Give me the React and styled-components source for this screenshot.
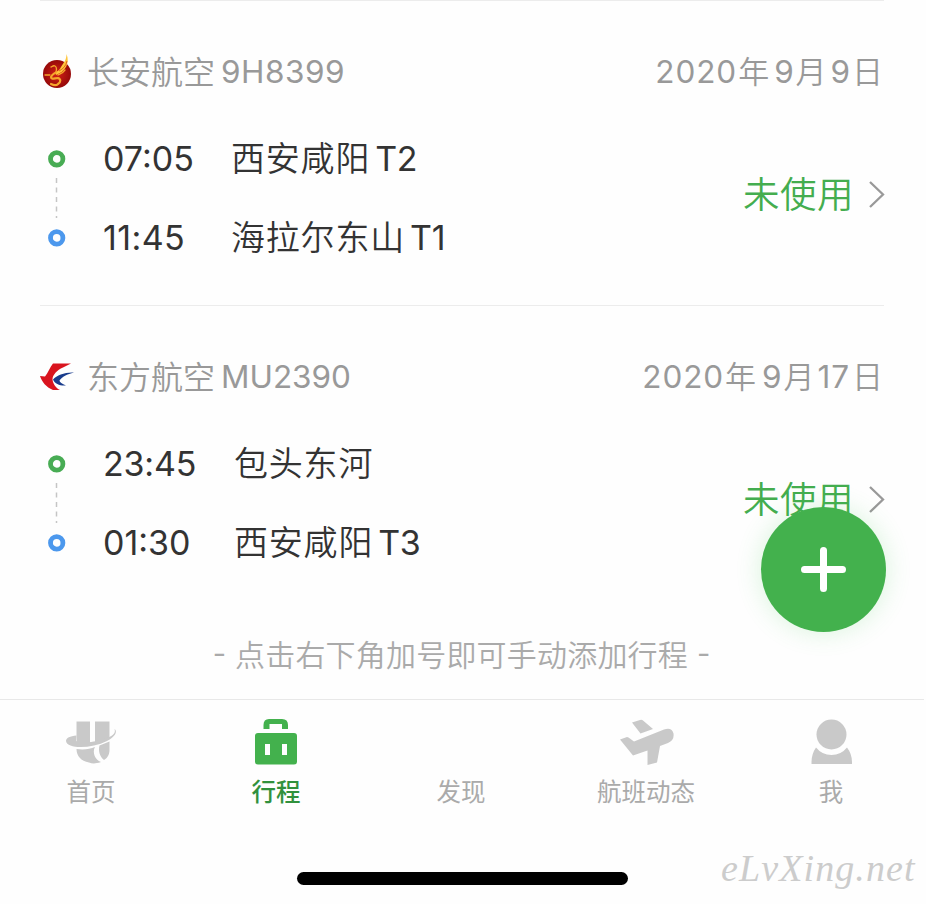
import React from "react";
import styled, { createGlobalStyle } from "styled-components";

const GlobalStyle = createGlobalStyle`
  * { box-sizing: border-box; }
  body { margin: 0; background: #fefefe; }
`;

const Screen = styled.main`
  position: relative;
  width: 926px;
  height: 904px;
  overflow: hidden;
  display: flex;
  flex-direction: column;
  background: #fefefe;
  font-family: "Inter", "Noto Sans CJK SC", sans-serif;
  font-weight: 370;
  white-space: nowrap;
`;

const Trips = styled.div`
  height: 699px;
  padding: 0 43px 0 40px;
`;

const Card = styled.section`
  height: 305px;
  border-top: 1px solid #ececec;
  padding-top: 47px;
  margin-right: -1px;
`;

const Header = styled.header`
  display: flex;
  align-items: center;
  height: 48px;
  padding-right: 1px;
  color: #999;
`;

const Logo = styled.svg`
  width: 34px;
  height: 38px;
  margin-right: 13px;
  flex: none;
`;

const Cjk = styled.span`
  font-family: "Noto Sans CJK SC", sans-serif;
  font-weight: ${(p) => p.$weight || 350};
  font-size: ${(p) => p.$size}px;
  line-height: 46px;
  padding-bottom: 4px;
  letter-spacing: ${(p) => p.$track || 0}px;
`;

const Latin = styled.span`
  font-size: ${(p) => p.$size}px;
  line-height: 48px;
  letter-spacing: ${(p) => p.$track || 0}px;
  margin-left: ${(p) => p.$before || 0}px;
  margin-right: ${(p) => p.$after || 0}px;
`;

const DateLabel = styled.div`
  margin-left: auto;
  display: flex;
  align-items: center;
`;

const Body = styled.div`
  display: flex;
  margin-top: 39px;
  height: 127px;
`;

const Route = styled.div`
  width: 63px;
  padding: 15px 0 0 8px;
`;

const Legs = styled.div`
  display: flex;
  flex-direction: column;
  gap: 31px;
  color: #333;
`;

const Leg = styled.div`
  display: flex;
  align-items: center;
  height: 48px;
`;

const Time = styled.time`
  width: ${(p) => p.$width}px;
  font-size: 34px;
  line-height: 48px;
  letter-spacing: ${(p) => p.$track}px;
`;

const Status = styled.div`
  display: flex;
  align-items: center;
  height: 48px;
  margin: 36px -3px 0 auto;
  color: #44ad4f;
`;

const Chevron = styled.svg`
  width: 20px;
  height: 30px;
  margin-left: 13px;
`;

const Hint = styled.p`
  display: flex;
  justify-content: center;
  margin: 20px 0 0;
  color: #aaa;
`;

const HintDash = styled.span`
  font-size: 29px;
  line-height: 48px;
  margin: 0 9px;
`;

const AddButton = styled.button`
  position: absolute;
  left: 761px;
  top: 507px;
  width: 125px;
  height: 125px;
  padding: 0;
  border: 0;
  border-radius: 50%;
  background: #43b14d;
  box-shadow: 0 0 26px rgba(67, 200, 80, 0.2);
  svg { display: block; }
`;

const TabBar = styled.nav`
  display: grid;
  grid-template-columns: repeat(5, 185px);
  width: 924px;
  height: 130px;
  border-top: 1px solid #e8e8e8;
  padding-top: 13px;
`;

const Tab = styled.a`
  display: flex;
  flex-direction: column;
  align-items: center;
  padding-right: 4px;
  color: ${(p) => (p.$active ? "#31913d" : "#aaa")};
  font-family: "Noto Sans CJK SC", sans-serif;
  font-size: 24.5px;
  font-weight: ${(p) => (p.$active ? 500 : 400)};
  line-height: 36px;
  svg { width: 60px; height: 60px; display: block; fill: ${(p) => (p.$active ? "#43b14d" : "#c9c9c9")}; }
`;

const TabLabel = styled.span`
  margin-left: 1px;
`;

const Footer = styled.footer`
  display: flex;
  height: 75px;
`;

const HomeIndicator = styled.div`
  flex: none;
  width: 331px;
  height: 13px;
  margin: 43px 0 0 297px;
  border-radius: 7px;
  background: #000;
`;

const Watermark = styled.span`
  margin: 15px 0 0 93px;
  font-family: "Liberation Serif", serif;
  font-style: italic;
  font-size: 38px;
  line-height: 48px;
  letter-spacing: 1.1px;
  color: #ccc;
`;

const ChanganLogo = () => (
  <Logo viewBox="0 0 34 38">
    <defs>
      <radialGradient id="changan">
        <stop offset="0" stopColor="#d32117" />
        <stop offset="1" stopColor="#960909" />
      </radialGradient>
    </defs>
    <circle cx="17" cy="21" r="14" fill="url(#changan)" />
    <g fill="none" stroke="#f5a62c" strokeLinecap="round">
      <path d="M21 18C17 19 12 21 11 24C11 27 15 25 18 25C21 26 21 29 18 31C16 33 13 32 11 31" strokeWidth="2.2" />
      <path d="M25 17C22 21 20 21 18 22M15 20C17 18 17 14 15 13C13 12 12 14 11 14M10 22L5 22" strokeWidth="1.3" />
    </g>
    <path d="M26.500 1C30 10 26 18 16 22C15 20 19 18 21 14C24 9 26.500 7 26.500 1Z" fill="#ffc63b" />
    <path d="M27 8C26 13 23 16 19 18" fill="none" stroke="#cf3b16" strokeWidth=".7" />
  </Logo>
);

const EasternLogo = () => (
  <Logo viewBox="0 0 34 38">
    <path d="M13 5.5H31L23 9.500C17 12 12.500 17 12.500 21.500C13 26 16 30 20 32H13C6 29 2 24 0 18L5 18.500C8 15 10 9 13 5.500Z" fill="#d9141e" />
    <path d="M34 14.500C25 14 17 17 13 21.500C15 26 20 28 26 27.500C22 26 19.500 24 19.500 22.500C22 19 27 16 34 14.500Z" fill="#193c8c" />
  </Logo>
);

const RouteMark = () => (
  <Route>
    <svg width="18" height="97" viewBox="0 0 18 97" fill="none">
      <circle cx="8.7" cy="8.9" r="6.2" stroke="#48ac54" strokeWidth="4.8" />
      <path d="M8.5 28V68" stroke="#c5c5c5" strokeWidth="1.5" strokeDasharray="5 4.5" />
      <circle cx="8.7" cy="87.9" r="6.2" stroke="#4c98ed" strokeWidth="4.8" />
    </svg>
  </Route>
);

function Flight({ logo, airline, number, track, date, legs, timeWidth }) {
  return (
    <Card>
      <Header>
        {logo}
        <Cjk $size={32}>{airline}</Cjk>
        <Latin $size={31.5} $before={6} $track={track}>{number}</Latin>
        <DateLabel>
          {date.map(([n, unit, before, after]) => (
            <React.Fragment key={unit}>
              <Latin $size={31.5} $track={0.9} $before={before} $after={after}>{n}</Latin>
              <Cjk $size={31}>{unit}</Cjk>
            </React.Fragment>
          ))}
        </DateLabel>
      </Header>
      <Body>
        <RouteMark />
        <Legs>
          {legs.map(([time, timeTrack, place, terminal]) => (
            <Leg key={time}>
              <Time $width={timeWidth} $track={timeTrack}>{time}</Time>
              <Cjk $size={34} $track={0.8}>{place}</Cjk>
              <Latin $size={34} $before={5} $track={-0.3}>{terminal}</Latin>
            </Leg>
          ))}
        </Legs>
        <Status>
          <Cjk $size={36.5} $track={0.5}>未使用</Cjk>
          <Chevron viewBox="0 0 20 30" fill="none" stroke="#999" strokeWidth="2.3">
            <path d="M3 2L16 14.5L3 27" />
          </Chevron>
        </Status>
      </Body>
    </Card>
  );
}

const HomeIcon = () => (
  <svg viewBox="0 0 60 60">
    <path d="M15.500 8.500H29V31H15.500ZM34 8.500H48.500V25L34 30Z" />
    <path d="M15.500 22.500C9 23 5 25 5 28C6 36 30 36 46 28C54 24 57 18.500 53.500 16C55 20 52 22.500 47 24.500C36 29 24 31 15 28Z" />
    <path d="M15.500 36C23 37 29 36 34 34C31 39 34 47 40 49C34 51 31 50.500 28 49.500C20 48 15.500 43 15.500 36ZM38.500 32.500L48.500 28.500V37C48.500 42 46 45.500 43 47C39 44 37 38 38.500 32.500Z" />
  </svg>
);

const BagIcon = () => (
  <svg viewBox="0 0 60 60">
    <path d="M17.5 16V12Q17.5 6 23 6H36Q42 6 42 12V16H36V11H23.5V16Z" />
    <path fillRule="evenodd" d="M12 20H48Q51 20 51 23V48.5Q51 51.5 48 51.5H12Q9 51.5 9 48.5V23Q9 20 12 20ZM19 31V42H24V31ZM36 31V42H41V31Z" />
  </svg>
);

const PlaneIcon = () => (
  <svg viewBox="0 0 60 60">
    <path d="M16 9.500L24 7Q26 6.500 27 7.500L37 16L24.500 20.500ZM4 26.500L11 24L12.500 24.500L18 28.500L48 16.500Q56 14 57.500 20.500Q58.500 27 52 30L44 33L41 49.500L31.500 52V37.500L17 42.500Z" />
  </svg>
);

const PersonIcon = () => (
  <svg viewBox="0 0 60 60">
    <circle cx="30.5" cy="21.500" r="15" />
    <path d="M15 34.500Q21 42 30.500 42Q40 42 46 34.500Q51 41 51 49V51H10.500V49Q10.500 41 15 34.500Z" />
  </svg>
);

const tabs = [
  ["首页", <HomeIcon />],
  ["行程", <BagIcon />, true],
  ["发现", <svg />],
  ["航班动态", <PlaneIcon />],
  ["我", <PersonIcon />],
];

export default function App() {
  return (
    <>
      <GlobalStyle />
      <Screen>
        <Trips>
          <Flight
            logo={<ChanganLogo />}
            airline="长安航空"
            number="9H8399"
            track={0.5}
            date={[["2020", "年", 0, 1], ["9", "月", 5, 1], ["9", "日", 4, 1]]}
            timeWidth={128}
            legs={[["07:05", 0, "西安咸阳", "T2"], ["11:45", 0.4, "海拉尔东山", "T1"]]}
          />
          <Flight
            logo={<EasternLogo />}
            airline="东方航空"
            number="MU2390"
            track={0}
            date={[["2020", "年", 0, 1], ["9", "月", 6, 1], ["17", "日", 3, 2]]}
            timeWidth={131}
            legs={[["23:45", -0.2, "包头东河", ""], ["01:30", 0, "西安咸阳", "T3"]]}
          />
          <Hint>
            <HintDash>-</HintDash>
            <Cjk $size={30} $track={0.2}>点击右下角加号即可手动添加行程</Cjk>
            <HintDash>-</HintDash>
          </Hint>
        </Trips>
        <TabBar>
          {tabs.map(([label, icon, active]) => (
            <Tab key={label} $active={active}>
              {icon}
              <TabLabel>{label}</TabLabel>
            </Tab>
          ))}
        </TabBar>
        <Footer>
          <HomeIndicator />
          <Watermark>eLvXing.net</Watermark>
        </Footer>
        <AddButton aria-label="添加行程">
          <svg width="125" height="125" viewBox="0 0 125 125" stroke="#fff" strokeWidth="7" strokeLinecap="round">
            <path d="M43.5 62.5H81.5M62.5 43.5V81.5" />
          </svg>
        </AddButton>
      </Screen>
    </>
  );
}
